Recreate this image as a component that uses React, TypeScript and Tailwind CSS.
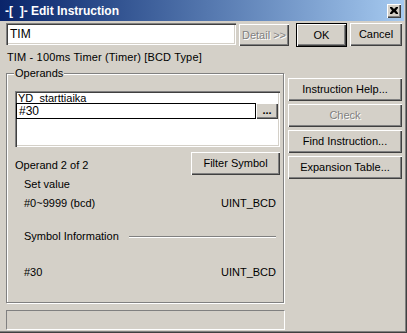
import React from "react";

const raised =
  "bg-[#d4d0c8] shadow-[inset_1px_1px_0_#ffffff,inset_-1px_-1px_0_#404040,inset_-2px_-2px_0_#808080]";
const sunken =
  "bg-white shadow-[inset_1px_1px_0_#808080,inset_2px_2px_0_#404040,inset_-1px_-1px_0_#ffffff,inset_-2px_-2px_0_#d4d0c8]";
const disabledText = "text-[#808080] [text-shadow:1px_1px_0_#ffffff]";

function Btn({
  children,
  className = "",
  disabled = false,
  isDefault = false,
}: {
  children: React.ReactNode;
  className?: string;
  disabled?: boolean;
  isDefault?: boolean;
}) {
  if (isDefault) {
    return (
      <div className={`border border-black ${className}`}>
        <div className={`${raised} w-full h-full flex items-center justify-center`}>
          {children}
        </div>
      </div>
    );
  }
  return (
    <div
      className={`${raised} flex items-center justify-center ${
        disabled ? disabledText : ""
      } ${className}`}
    >
      {children}
    </div>
  );
}

export default function App() {
  return (
    <div className="w-[407px] h-[333px] bg-[#d4d0c8] flex flex-col font-['Liberation_Sans',Arial,sans-serif] text-[11px] leading-[13px] text-black shadow-[inset_-1px_-1px_0_#404040,inset_-2px_-2px_0_#808080] overflow-hidden">
      {/* Title bar */}
      <div className="h-[21px] w-[404px] bg-gradient-to-r from-[#0a246a] to-[#a6caf0] flex items-center justify-between pl-[5px] pr-[3px]">
        <span className="text-white font-bold text-[12px] leading-[14px] whitespace-pre">
          {"-[\u00a0\u00a0]- Edit Instruction"}
        </span>
        <div className={`${raised} w-[14px] h-[14px] flex items-center justify-center`}>
          <svg width="8" height="7" viewBox="0 0 8 7">
            <path d="M0 0h2l2 2 2-2h2v1L6 3.5 8 6v1H6L4 5 2 7H0V6l2-2.5L0 1z" fill="#000" />
          </svg>
        </div>
      </div>

      {/* Top row */}
      <div className="flex pl-[6px] mt-[2px]">
        <div className={`${sunken} w-[230px] h-[22px] flex items-center pl-[4px] text-[12px]`}>
          TIM
        </div>
        <Btn disabled className="w-[50px] h-[22px] ml-[3px] mt-[1px]">
          Detail &gt;&gt;
        </Btn>
        <Btn isDefault className="w-[51px] h-[24px] ml-[7px]">
          OK
        </Btn>
        <Btn className="w-[52px] h-[23px] ml-[3px]">Cancel</Btn>
      </div>

      {/* Description */}
      <div className="pl-[7px] mt-[4px] tracking-[0.15px]">TIM - 100ms Timer (Timer) [BCD Type]</div>

      {/* Main area */}
      <div className="flex pl-[6px] mt-[9px] gap-[4px]">
        {/* Left column */}
        <div className="w-[278px] flex flex-col">
          <div className="relative h-[230px] border border-[#808080] shadow-[inset_1px_1px_0_#ffffff,1px_1px_0_#ffffff] flex flex-col pl-[8px] pr-[3px] pt-[17px]">
            <span className="absolute left-[7px] top-[-7px] bg-[#d4d0c8] px-[1px]">Operands</span>
            {/* Listbox */}
            <div className={`${sunken} h-[56px] flex flex-col pt-[2px] pl-[1px] pr-[2px]`}>
              <div className="h-[10px] leading-[11px] pl-[2px] overflow-hidden">YD_starttiaika</div>
              <div className="flex h-[16px]">
                <div className="flex-1 border border-black bg-white flex items-center pl-[2px] text-[12px]">
                  #30
                </div>
                <Btn className="w-[22px] h-[16px] font-bold leading-[8px] pb-[2px]">...</Btn>
              </div>
            </div>
            {/* Operand row */}
            <div className="flex items-start justify-between mt-[5px]">
              <span className="mt-[7px]">Operand 2 of 2</span>
              <Btn className="w-[89px] h-[23px]">Filter Symbol</Btn>
            </div>
            <div className="pl-[9px] pr-[4px] flex flex-col">
              <div className="mt-[3px]">Set value</div>
              <div className="mt-[6px] flex justify-between">
                <span>#0~9999 (bcd)</span>
                <span>UINT_BCD</span>
              </div>
              <div className="mt-[20px] flex items-center">
                <span>Symbol Information</span>
                <div className="flex-1 ml-[10px] h-[2px] border-t border-[#808080] border-b border-b-white" />
              </div>
              <div className="mt-[23px] flex justify-between">
                <span>#30</span>
                <span>UINT_BCD</span>
              </div>
            </div>
          </div>
          {/* Status box */}
          <div className="mt-[7px] h-[20px] w-[279px] border border-[#808080] border-r-white border-b-white" />
        </div>

        {/* Right column */}
        <div className="w-[114px] flex flex-col gap-[3px] pt-[5px]">
          <Btn className="h-[23px]">Instruction Help...</Btn>
          <Btn disabled className="h-[23px]">
            Check
          </Btn>
          <Btn className="h-[23px]">Find Instruction...</Btn>
          <Btn className="h-[23px]">Expansion Table...</Btn>
        </div>
      </div>
    </div>
  );
}
